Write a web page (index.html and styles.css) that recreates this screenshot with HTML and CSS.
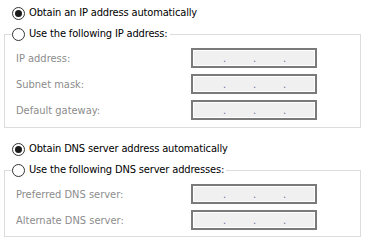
FILE: index.html
```html
<!DOCTYPE html>
<html>
<head>
<meta charset="utf-8">
<link rel="stylesheet" href="styles.css">
</head>
<body>
<div class="page">
  <div class="radio-row first">
    <span class="radio checked"></span><span class="rtext">Obtain an IP address automatically</span>
  </div>
  <fieldset class="group ip">
    <legend class="legend"><span class="radio"></span><span class="rtext">Use the following IP address:</span></legend>
    <div class="fields">
      <span class="label">IP address:</span>
      <div class="ipbox"><span class="dot">.</span><span class="dot">.</span><span class="dot">.</span></div>
      <span class="label">Subnet mask:</span>
      <div class="ipbox"><span class="dot">.</span><span class="dot">.</span><span class="dot">.</span></div>
      <span class="label">Default gateway:</span>
      <div class="ipbox"><span class="dot">.</span><span class="dot">.</span><span class="dot">.</span></div>
    </div>
  </fieldset>
  <div class="radio-row second">
    <span class="radio checked"></span><span class="rtext">Obtain DNS server address automatically</span>
  </div>
  <fieldset class="group dns">
    <legend class="legend"><span class="radio"></span><span class="rtext">Use the following DNS server addresses:</span></legend>
    <div class="fields">
      <span class="label">Preferred DNS server:</span>
      <div class="ipbox"><span class="dot">.</span><span class="dot">.</span><span class="dot">.</span></div>
      <span class="label">Alternate DNS server:</span>
      <div class="ipbox"><span class="dot">.</span><span class="dot">.</span><span class="dot">.</span></div>
    </div>
  </fieldset>
</div>
</body>
</html>
```

FILE: styles.css
```css
html, body {
  margin: 0;
  padding: 0;
  background: #ffffff;
}
.page {
  width: 367px;
  height: 251px;
  font-family: "DejaVu Sans Condensed", "Liberation Sans", sans-serif;
  font-size: 11px;
  color: #000;
  overflow: hidden;
}
.radio-row {
  display: flex;
  align-items: center;
  height: 14px;
  padding-left: 12px;
}
.radio-row.first { margin-top: 6px; }
.radio-row.second { margin-top: 14px; }
.radio {
  box-sizing: border-box;
  width: 13px;
  height: 13px;
  border: 1px solid #333;
  border-radius: 50%;
  background: #fff;
  display: inline-flex;
  align-items: center;
  justify-content: center;
  flex: none;
}
.radio.checked::after {
  content: "";
  width: 7px;
  height: 7px;
  border-radius: 50%;
  background: #1a1a1a;
}
.rtext {
  margin-left: 4px;
  line-height: 14px;
  white-space: nowrap;
  letter-spacing: -0.15px;
}
.group {
  margin: 7px 6px 0 4px;
  padding: 7px 0 7px 11px;
  border: 1px solid #dcdcdc;
  min-width: 0;
}
.group.dns { padding-bottom: 6px; }
.legend {
  display: flex;
  align-items: center;
  height: 14px;
  padding: 0 2px 0 0;
  margin-left: -4px;
}
.fields {
  display: grid;
  grid-template-columns: 175px 126px;
  row-gap: 6px;
  align-items: center;
}
.label {
  color: #8c8c8c;
  white-space: nowrap;
}
.ipbox {
  box-sizing: border-box;
  height: 20px;
  border: 2px solid #7a7a7a;
  box-shadow: inset 0 0 0 1px #ffffff;
  background: #f0f0f0;
  display: flex;
  padding-left: 30px;
  color: #6e6e9a;
  font-size: 11px;
  line-height: 18px;
}
.dot {
  width: 30px;
  flex: none;
}
```
